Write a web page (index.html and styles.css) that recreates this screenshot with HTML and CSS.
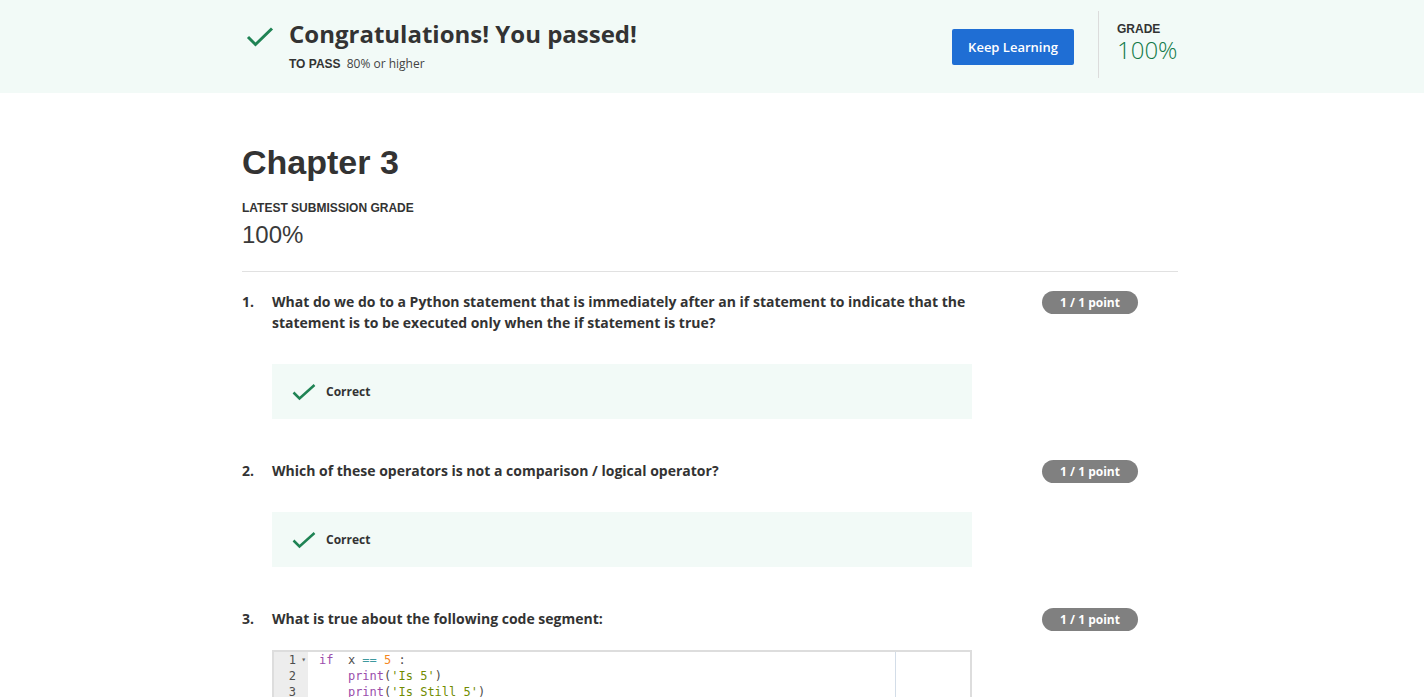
FILE: index.html
```html
<!DOCTYPE html>
<html lang="en">
<head>
<meta charset="utf-8">
<title>Chapter 3</title>
<link rel="stylesheet" href="styles.css">
</head>
<body>
<header class="banner">
  <div class="banner-inner">
    <div class="pass-info">
      <svg class="pass-check" width="28" height="20" viewBox="0 0 28 20"><path d="M2 10 L9.5 17.5 L26 1.5" fill="none" stroke="#1f8354" stroke-width="3"/></svg>
      <div class="pass-text">
        <h1 class="pass-title">Congratulations! You passed!</h1>
        <div class="pass-req"><span class="req-label">TO PASS</span> 80% or higher</div>
      </div>
    </div>
    <button class="keep-btn">Keep Learning</button>
    <div class="grade-box">
      <div class="grade-label">GRADE</div>
      <div class="grade-value">100%</div>
    </div>
  </div>
</header>

<main class="content">
  <h2 class="chapter">Chapter 3</h2>
  <div class="latest-label">LATEST SUBMISSION GRADE</div>
  <div class="latest-value">100%</div>
  <hr class="divider">

  <section class="question">
    <div class="q-num">1.</div>
    <div class="q-body">
      <p class="q-text">What do we do to a Python statement that is immediately after an if statement to indicate that the statement is to be executed only when the if statement is true?</p>
      <div class="result">
        <svg class="result-check" width="24" height="17" viewBox="0 0 24 17"><path d="M1.5 8.5 L7.5 14.5 L22.5 1" fill="none" stroke="#1f8354" stroke-width="2.5"/></svg>
        <span>Correct</span>
      </div>
    </div>
    <div class="q-points"><span class="pill">1 / 1 point</span></div>
  </section>

  <section class="question">
    <div class="q-num">2.</div>
    <div class="q-body">
      <p class="q-text">Which of these operators is not a comparison / logical operator?</p>
      <div class="result">
        <svg class="result-check" width="24" height="17" viewBox="0 0 24 17"><path d="M1.5 8.5 L7.5 14.5 L22.5 1" fill="none" stroke="#1f8354" stroke-width="2.5"/></svg>
        <span>Correct</span>
      </div>
    </div>
    <div class="q-points"><span class="pill">1 / 1 point</span></div>
  </section>

  <section class="question">
    <div class="q-num">3.</div>
    <div class="q-body">
      <p class="q-text q-text-code">What is true about the following code segment:</p>
      <div class="code-box">
        <div class="gutter">
          <div class="ln">1<span class="fold">▾</span></div>
          <div class="ln">2</div>
          <div class="ln">3</div>
        </div>
        <div class="code">
          <div class="cl"><span class="kw">if</span>  x <span class="op">==</span> <span class="num">5</span> :</div>
          <div class="cl">    <span class="kw">print</span>(<span class="str">'Is 5'</span>)</div>
          <div class="cl">    <span class="kw">print</span>(<span class="str">'Is Still 5'</span>)</div>
          <div class="print-margin"></div>
        </div>
      </div>
    </div>
    <div class="q-points"><span class="pill">1 / 1 point</span></div>
  </section>
</main>
</body>
</html>
```

FILE: styles.css
```css
* { box-sizing: border-box; }
html, body { margin: 0; padding: 0; }
body {
  background: #fff;
  color: #333;
  font-family: "Open Sans", "Liberation Sans", sans-serif;
  overflow: hidden;
}

.banner {
  background: #f2faf7;
  height: 93px;
}
.banner-inner {
  width: 936px;
  margin-left: calc(50% - 470px);
  height: 100%;
  display: flex;
  align-items: flex-start;
}
.pass-info {
  display: flex;
  align-items: flex-start;
  flex: 1;
}
.pass-check {
  margin: 27px 0 0 4px;
}
.pass-text {
  margin-left: 15px;
  margin-top: 18px;
}
.pass-title {
  margin: 0;
  font-size: 24px;
  font-weight: 700;
  line-height: 32px;
  color: #333;
}
.pass-req {
  font-size: 12px;
  line-height: 16px;
  margin-top: 6px;
  color: #444;
}
.req-label {
  font-family: "Liberation Sans", Arial, sans-serif;
  font-weight: 700;
  color: #333;
  margin-right: 3px;
}
.keep-btn {
  width: 122px;
  height: 36px;
  border: none;
  border-radius: 2px;
  background: #1f6ed4;
  color: #fff;
  font-family: "Open Sans", sans-serif;
  font-size: 13px;
  font-weight: 600;
  margin-right: 24px;
  margin-top: 29px;
  padding: 0;
}
.grade-box {
  border-left: 1px solid #dcdcdc;
  height: 67px;
  padding-left: 18px;
  width: 80px;
  margin-top: 11px;
  padding-top: 11px;
}
.grade-label {
  font-family: "Liberation Sans", Arial, sans-serif;
  font-weight: 700;
  font-size: 12px;
  line-height: 14px;
  color: #333;
}
.grade-value {
  font-size: 24px;
  font-weight: 300;
  color: #137a4a;
  line-height: 28px;
  white-space: nowrap;
}

.content {
  width: 936px;
  margin-left: calc(50% - 470px);
  padding-top: 49px;
}
.chapter {
  margin: 0;
  font-family: "Liberation Sans", Arial, sans-serif;
  font-size: 34px;
  font-weight: 700;
  line-height: 40px;
  color: #333;
}
.latest-label {
  margin-top: 19px;
  font-family: "Liberation Sans", Arial, sans-serif;
  font-weight: 700;
  font-size: 12px;
  line-height: 14px;
  color: #333;
}
.latest-value {
  margin-top: 5px;
  font-family: "Liberation Sans", Arial, sans-serif;
  font-size: 24px;
  font-weight: 400;
  line-height: 30px;
  color: #3a3a3a;
}
.divider {
  margin: 21px 0 0 0;
  border: none;
  border-top: 1px solid #e1e1e1;
  height: 0;
}

.question {
  display: grid;
  grid-template-columns: 30px 700px 1fr;
  margin-top: 19px;
}
.question + .question { margin-top: 41px; }
.q-num {
  font-size: 14px;
  font-weight: 700;
  line-height: 21px;
}
.q-text {
  margin: 0;
  font-size: 14px;
  font-weight: 700;
  line-height: 21px;
  color: #333;
  padding-right: 4px;
}
.result {
  margin-top: 31px;
  height: 55px;
  background: #f2faf7;
  display: flex;
  align-items: center;
  padding-left: 20px;
  font-size: 12px;
  font-weight: 700;
  color: #333;
}
.result-check { margin-right: 10px; margin-top: 1px; }
.q-points {
  display: flex;
  justify-content: flex-end;
  align-items: flex-start;
  padding-right: 40px;
}
.pill {
  width: 96px;
  height: 23px;
  border-radius: 12px;
  background: #808080;
  color: #fff;
  font-size: 12px;
  font-weight: 700;
  display: flex;
  align-items: center;
  justify-content: center;
}

.code-box {
  margin-top: 21px;
  border: 2px solid #dddddd;
  display: flex;
  height: 60px;
  background: #fff;
  font-family: "DejaVu Sans Mono", "Liberation Mono", monospace;
  font-size: 12px;
  line-height: 16px;
}
.gutter {
  width: 34px;
  background: #ededed;
  color: #4d4d4c;
}
.ln {
  text-align: right;
  padding-right: 12px;
  position: relative;
}
.fold {
  position: absolute;
  right: 2px;
  top: 0;
  font-size: 8px;
  color: #666;
}
.code {
  flex: 1;
  padding-left: 11px;
  position: relative;
  color: #4d4d4c;
}
.cl { white-space: pre; }
.print-margin {
  position: absolute;
  top: 0;
  bottom: 0;
  left: 587px;
  width: 1px;
  background: #d3dde8;
}
.kw { color: #9b4dab; }
.op { color: #3e999f; }
.num { color: #f5871f; }
.str { color: #718c00; }
```
